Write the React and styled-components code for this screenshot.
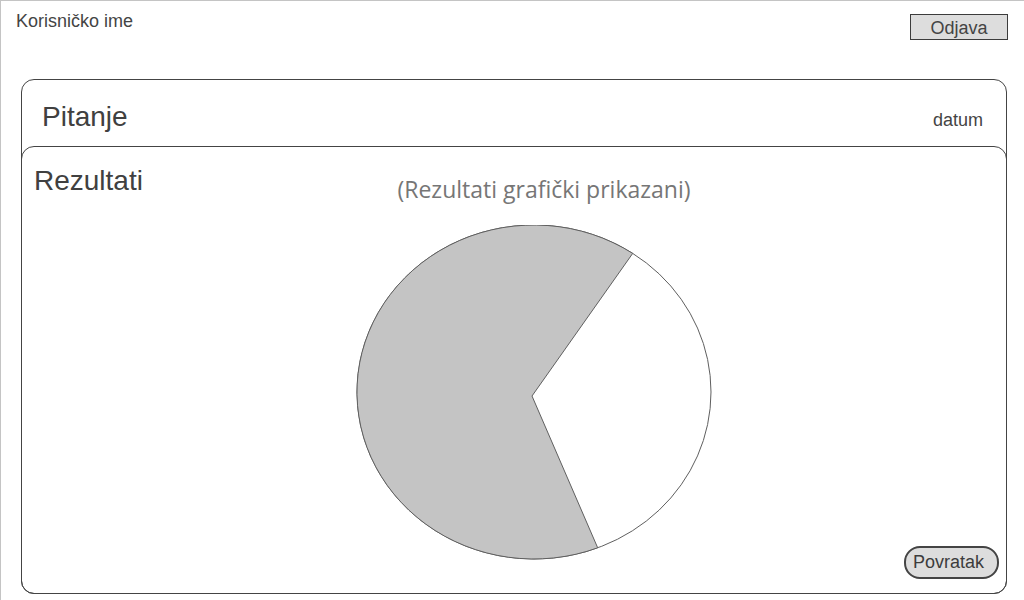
import React from "react";
import styled, { createGlobalStyle } from "styled-components";

const GlobalStyle = createGlobalStyle`
  html, body {
    margin: 0;
    padding: 0;
    background: #ffffff;
  }
  body {
    font-family: "Liberation Sans", Arial, sans-serif;
    color: #444444;
  }
`;

const Page = styled.div`
  box-sizing: border-box;
  width: 1024px;
  height: 600px;
  border-top: 1px solid #c4c4c4;
  border-left: 1px solid #c4c4c4;
  display: flex;
  flex-direction: column;
  overflow: hidden;
`;

const TopBar = styled.div`
  height: 78px;
  display: flex;
  justify-content: space-between;
  align-items: flex-start;
  padding: 0 16px 0 15px;
`;

const UserName = styled.div`
  font-size: 18px;
  margin-top: 10px;
`;

const FlatButton = styled.button`
  box-sizing: border-box;
  width: 98px;
  height: 26px;
  margin-top: 13px;
  padding: 1px 0 0;
  background: #dddddd;
  border: 1px solid #3c3c3c;
  font-family: "Liberation Sans", Arial, sans-serif;
  font-size: 18px;
  color: #444444;
  line-height: 24px;
`;

const Card = styled.div`
  box-sizing: border-box;
  margin-left: 20px;
  width: 986px;
  height: 515px;
  border: 1px solid #444444;
  border-radius: 13px;
  display: flex;
  flex-direction: column;
`;

const CardHeader = styled.div`
  box-sizing: border-box;
  height: 66px;
  display: flex;
  justify-content: space-between;
  align-items: baseline;
  padding: 21px 23px 0 20px;
`;

const Heading = styled.div`
  font-size: 28px;
  color: #404040;
`;

const DateText = styled.div`
  font-size: 18px;
  color: #444444;
`;

const Section = styled.div`
  flex: 1;
  margin: 0 -1px -1px -1px;
  border: 1px solid #444444;
  border-radius: 13px;
  padding: 18px 7px 14px 12px;
  display: grid;
  grid-template-columns: 322px 356px 1fr;
  grid-template-rows: auto 1fr;
`;

const SectionTitle = styled(Heading)`
  grid-column: 1;
  grid-row: 1;
`;

const ChartColumn = styled.div`
  grid-column: 2;
  grid-row: 1 / span 2;
  display: flex;
  flex-direction: column;
`;

const Subtitle = styled.div`
  font-family: "Open Sans", "Noto Sans", sans-serif;
  font-size: 23px;
  color: #767676;
  text-align: center;
  padding-left: 20px;
  margin-top: 8px;
  white-space: nowrap;
`;

const PieWrap = styled.div`
  margin-top: 20px;
  line-height: 0;
`;

const PillButton = styled.button`
  grid-column: 3;
  grid-row: 2;
  justify-self: end;
  align-self: end;
  box-sizing: border-box;
  width: 95px;
  height: 33px;
  padding: 0 6px 0 0;
  background: #dddddd;
  border: 2px solid #444444;
  border-radius: 16px;
  font-family: "Liberation Sans", Arial, sans-serif;
  font-size: 18px;
  color: #3c3c3c;
`;

const Pie = () => (
  <svg width="356" height="336" viewBox="0 0 356 336">
    <ellipse cx="178" cy="167" rx="177" ry="167" fill="#ffffff" stroke="#5f5f5f" strokeWidth="1" />
    <path
      d="M176 171 L276.7 28.4 A177 167 0 1 0 241.7 322.8 Z"
      fill="#c4c4c4"
      stroke="#5f5f5f"
      strokeWidth="1"
      strokeLinejoin="round"
    />
  </svg>
);

export default function App() {
  return (
    <>
      <GlobalStyle />
      <Page>
        <TopBar>
          <UserName>Korisničko ime</UserName>
          <FlatButton>Odjava</FlatButton>
        </TopBar>
        <Card>
          <CardHeader>
            <Heading>Pitanje</Heading>
            <DateText>datum</DateText>
          </CardHeader>
          <Section>
            <SectionTitle>Rezultati</SectionTitle>
            <ChartColumn>
              <Subtitle>(Rezultati grafički prikazani)</Subtitle>
              <PieWrap>
                <Pie />
              </PieWrap>
            </ChartColumn>
            <PillButton>Povratak</PillButton>
          </Section>
        </Card>
      </Page>
    </>
  );
}
